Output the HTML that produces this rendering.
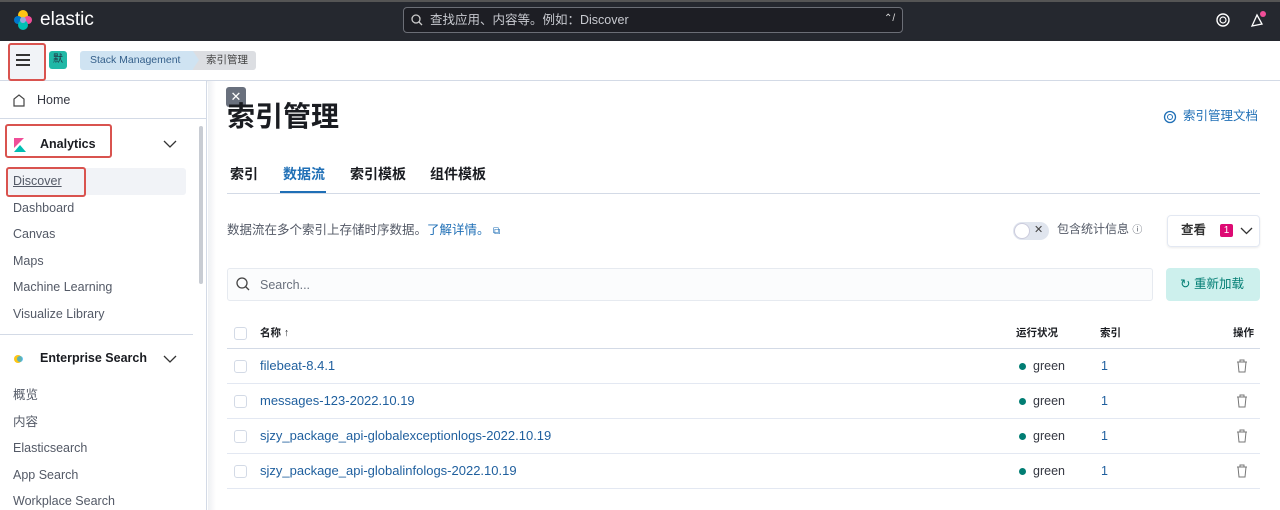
<!DOCTYPE html>
<html><head><meta charset="utf-8"><style>
*{box-sizing:border-box;margin:0;padding:0}
body{width:1280px;height:510px;overflow:hidden;font-family:"Liberation Sans","Noto Sans CJK SC",sans-serif;background:#fff;position:relative;color:#343741;line-height:1.15}
.abs{position:absolute}
.top{left:0;top:0;width:1280px;height:41px;background:#25282f;border-top:2px solid #555}
.bar2{left:0;top:41px;width:1280px;height:40px;background:#fff;border-bottom:1px solid #d3dae6;box-shadow:0 1px 3px rgba(0,0,0,.08)}
.side{left:0;top:81px;width:207px;height:429px;background:#fff;border-right:1px solid #d3dae6}
.main{left:208px;top:81px;width:1072px;height:429px;background:#fff}
.red{border:2px solid #d9534f;border-radius:3px}
.nav{font-size:12.5px;color:#535966;left:13px}
.tab{font-size:14px;font-weight:bold;top:166px;color:#1a1c21}
.row{left:227px;width:1033px;height:35px;border-bottom:1px solid #e3e8f2}
.cb{position:absolute;left:7px;top:11px;width:13px;height:13px;border:1px solid #d3dae6;border-radius:3px}
.lnk{position:absolute;left:33px;top:10px;font-size:13px;color:#1f5f9e}
.dot{position:absolute;left:792px;top:14px;width:7px;height:7px;border-radius:50%;background:#017d73}
.gr{position:absolute;left:806px;top:10px;font-size:12.5px;color:#343741}
.one{position:absolute;left:874px;top:10px;font-size:12.5px;color:#1f5f9e}
.tr{position:absolute;left:1008px;top:9px}
</style></head><body>
<div class="abs top"></div>
<svg class="abs" style="left:12px;top:9px" width="22" height="22" viewBox="0 0 22 22"><circle cx="11" cy="6" r="5" fill="#fec514"/><circle cx="6" cy="11" r="4" fill="#0077cc"/><circle cx="16" cy="11" r="4" fill="#f04e98"/><circle cx="11" cy="16" r="5" fill="#00bfb3"/><circle cx="11" cy="11" r="3" fill="#9ad"/></svg>
<div class="abs" style="left:40px;top:9px;color:#fff;font-size:19px">elastic</div>
<div class="abs" style="left:403px;top:7px;width:500px;height:26px;border:1px solid #6b6e76;border-radius:4px;background:#1d1e24"></div>
<svg class="abs" style="left:411px;top:14px" width="12" height="12"><circle cx="5" cy="5" r="4" stroke="#ccc" fill="none" stroke-width="1.3"/><path d="M8 8l3 3" stroke="#ccc" stroke-width="1.3"/></svg>
<div class="abs" style="left:430px;top:13px;font-size:12.5px;color:#c8cad0">查找应用、内容等。例如：Discover</div>
<div class="abs" style="left:884px;top:13px;font-size:10px;color:#ddd">⌃/</div>
<svg class="abs" style="left:1215px;top:12px" width="16" height="16"><circle cx="8" cy="8" r="6" stroke="#fff" fill="none" stroke-width="1.4"/><circle cx="8" cy="8" r="3" stroke="#fff" fill="none" stroke-width="1.2"/></svg>
<svg class="abs" style="left:1249px;top:11px" width="18" height="18"><path d="M3 15L8 4l5 9z" stroke="#fff" fill="none" stroke-width="1.3"/><circle cx="14" cy="3" r="3" fill="#f04e98"/></svg>
<div class="abs bar2"></div>
<div class="abs red" style="left:8px;top:43px;width:38px;height:38px;background:#f1f3f7"></div>
<div class="abs" style="left:16px;top:54px;width:14px;height:2px;background:#333;box-shadow:0 5px 0 #333,0 10px 0 #333"></div>
<div class="abs" style="left:49px;top:51px;width:18px;height:18px;border-radius:3px;background:#20b8a6;font-size:10px;text-align:center;line-height:18px;color:#234">默</div>
<div class="abs" style="left:80px;top:51px;width:113px;height:19px;background:#cfe3f2;border-radius:3px 0 0 3px;font-size:10.5px;color:#345f8a;line-height:19px;padding-left:10px">Stack Management</div>
<div class="abs" style="left:193px;top:51px;width:63px;height:19px;background:#dcdee2;border-radius:0 3px 3px 0;font-size:10.5px;line-height:19px;padding-left:13px;color:#444">索引管理</div>
<div class="abs" style="left:193px;top:51px;width:0;height:0;border-top:9.5px solid transparent;border-bottom:9.5px solid transparent;border-left:6px solid #cfe3f2"></div>
<div class="abs side"></div>
<div class="abs" style="left:0;top:81px;width:207px;height:38px;border-bottom:1px solid #d3dae6"></div>
<svg class="abs" style="left:12px;top:93px" width="14" height="14"><path d="M2 13V6l5-4 5 4v7z" stroke="#444" fill="none" stroke-width="1.2"/></svg>
<div class="abs" style="left:37px;top:93px;font-size:12.5px">Home</div>
<div class="abs red" style="left:5px;top:124px;width:107px;height:34px"></div>
<svg class="abs" style="left:14px;top:138px" width="12" height="14"><path d="M0 0h10L0 10z" fill="#f04e98"/><path d="M0 14L6 7l6 7z" fill="#00bfb3"/></svg>
<div class="abs" style="left:40px;top:137px;font-size:12.5px;font-weight:bold;color:#1a1c21">Analytics</div>
<svg class="abs" style="left:163px;top:140px" width="14" height="9"><path d="M1 1l6 6 6-6" stroke="#333" fill="none" stroke-width="1.3"/></svg>
<div class="abs" style="left:8px;top:168px;width:178px;height:27px;background:#f1f3f7;border-radius:3px"></div>
<div class="abs red" style="left:6px;top:167px;width:80px;height:30px"></div>
<div class="abs nav" style="top:174px;text-decoration:underline">Discover</div>
<div class="abs nav" style="top:201px">Dashboard</div>
<div class="abs nav" style="top:227px">Canvas</div>
<div class="abs nav" style="top:254px">Maps</div>
<div class="abs nav" style="top:280px">Machine Learning</div>
<div class="abs nav" style="top:307px">Visualize Library</div>
<div class="abs" style="left:199px;top:126px;width:4px;height:158px;background:#c8ccd3;border-radius:2px"></div>
<div class="abs" style="left:0;top:334px;width:193px;height:1px;background:#d3dae6"></div>
<svg class="abs" style="left:12px;top:351px" width="16" height="16"><circle cx="6" cy="8" r="4" fill="#fec514"/><path d="M8 2a6 6 0 010 12 6 6 0 000-12z" fill="#00bfb3"/><circle cx="8" cy="8" r="3" fill="#1ba9f5" opacity=".7"/></svg>
<div class="abs" style="left:40px;top:351px;font-size:12.5px;font-weight:bold;color:#1a1c21">Enterprise Search</div>
<svg class="abs" style="left:163px;top:355px" width="14" height="9"><path d="M1 1l6 6 6-6" stroke="#333" fill="none" stroke-width="1.3"/></svg>
<div class="abs nav" style="top:388px">概览</div>
<div class="abs nav" style="top:415px">内容</div>
<div class="abs nav" style="top:441px">Elasticsearch</div>
<div class="abs nav" style="top:468px">App Search</div>
<div class="abs nav" style="top:494px">Workplace Search</div>
<div class="abs main"></div>
<div class="abs" style="left:208px;top:81px;width:8px;height:429px;background:linear-gradient(90deg,#eef0f3,#fff)"></div>
<div class="abs" style="left:226px;top:87px;width:20px;height:20px;background:#69707d;border-radius:3px;color:#fff;text-align:center;line-height:20px;font-size:13px">✕</div>
<div class="abs" style="left:227px;top:101px;font-size:28px;font-weight:bold;color:#1a1c21">索引管理</div>
<svg class="abs" style="left:1163px;top:110px" width="14" height="14"><circle cx="7" cy="7" r="5.5" stroke="#1f6fb6" fill="none" stroke-width="1.3"/><circle cx="7" cy="7" r="2.5" stroke="#1f6fb6" fill="none"/></svg>
<div class="abs" style="left:1183px;top:109px;font-size:12.5px;color:#1f6fb6">索引管理文档</div>
<div class="abs tab" style="left:230px">索引</div>
<div class="abs tab" style="left:283px;color:#1f6fb6">数据流</div>
<div class="abs" style="left:280px;top:191px;width:46px;height:2px;background:#1f6fb6"></div>
<div class="abs tab" style="left:350px">索引模板</div>
<div class="abs tab" style="left:430px">组件模板</div>
<div class="abs" style="left:227px;top:193px;width:1033px;height:1px;background:#d3dae6"></div>
<div class="abs" style="left:227px;top:223px;font-size:12.5px;color:#535966">数据流在多个索引上存储时序数据。<span style="color:#1f6fb6">了解详情。</span> <span style="color:#1f6fb6;font-size:10px">⧉</span></div>
<div class="abs" style="left:1013px;top:222px;width:36px;height:18px;border-radius:9px;background:#e0e5ee"></div>
<div class="abs" style="left:1014px;top:223px;width:16px;height:16px;border-radius:50%;background:#fff;border:1px solid #ccd"></div>
<div class="abs" style="left:1034px;top:224px;font-size:11px;color:#444">✕</div>
<div class="abs" style="left:1057px;top:223px;font-size:12px;color:#535966">包含统计信息 <span style="font-size:10px">ⓘ</span></div>
<div class="abs" style="left:1167px;top:215px;width:93px;height:32px;border:1px solid #e3e8f2;border-radius:4px;box-shadow:0 1px 2px rgba(0,0,0,.08)"></div>
<div class="abs" style="left:1181px;top:223px;font-size:12.5px;font-weight:bold;color:#333">查看</div>
<div class="abs" style="left:1220px;top:224px;width:13px;height:13px;background:#dd0a73;border-radius:2px;color:#fff;font-size:10px;text-align:center;line-height:13px">1</div>
<svg class="abs" style="left:1240px;top:227px" width="13" height="8"><path d="M1 1l5.5 5.5L12 1" stroke="#333" fill="none" stroke-width="1.3"/></svg>
<div class="abs" style="left:227px;top:268px;width:926px;height:33px;background:#fbfcfd;border:1px solid #e6eaf0;border-radius:3px"></div>
<svg class="abs" style="left:236px;top:277px" width="14" height="14"><circle cx="6" cy="6" r="5" stroke="#444" fill="none" stroke-width="1.3"/><path d="M9.5 9.5l3.5 3.5" stroke="#444" stroke-width="1.3"/></svg>
<div class="abs" style="left:260px;top:278px;font-size:12.5px;color:#69707d">Search...</div>
<div class="abs" style="left:1166px;top:268px;width:94px;height:33px;background:#cdf0ed;border-radius:4px"></div>
<div class="abs" style="left:1180px;top:277px;font-size:12.5px;color:#017d73">↻ 重新加载</div>
<div class="abs row" style="top:318px;height:31px;border-bottom:1px solid #d3dae6"><div class="cb" style="top:9px"></div><div class="abs" style="left:33px;top:9px;font-size:10.5px;font-weight:bold;color:#1a1c21">名称 ↑</div><div class="abs" style="left:789px;top:9px;font-size:10.5px;font-weight:bold;color:#1a1c21">运行状况</div><div class="abs" style="left:873px;top:9px;font-size:10.5px;font-weight:bold;color:#1a1c21">索引</div><div class="abs" style="left:1006px;top:9px;font-size:10.5px;font-weight:bold;color:#1a1c21">操作</div></div>
<div class="abs row" style="top:349px"><div class="cb"></div><div class="lnk">filebeat-8.4.1</div><div class="dot"></div><div class="gr">green</div><div class="one">1</div><div class="tr"><svg width="14" height="16"><path d="M2 4h10M5 4V2h4v2M3 4l1 10h6l1-10" stroke="#777" fill="none"/></svg></div></div>
<div class="abs row" style="top:384px"><div class="cb"></div><div class="lnk">messages-123-2022.10.19</div><div class="dot"></div><div class="gr">green</div><div class="one">1</div><div class="tr"><svg width="14" height="16"><path d="M2 4h10M5 4V2h4v2M3 4l1 10h6l1-10" stroke="#777" fill="none"/></svg></div></div>
<div class="abs row" style="top:419px"><div class="cb"></div><div class="lnk">sjzy_package_api-globalexceptionlogs-2022.10.19</div><div class="dot"></div><div class="gr">green</div><div class="one">1</div><div class="tr"><svg width="14" height="16"><path d="M2 4h10M5 4V2h4v2M3 4l1 10h6l1-10" stroke="#777" fill="none"/></svg></div></div>
<div class="abs row" style="top:454px"><div class="cb"></div><div class="lnk">sjzy_package_api-globalinfologs-2022.10.19</div><div class="dot"></div><div class="gr">green</div><div class="one">1</div><div class="tr"><svg width="14" height="16"><path d="M2 4h10M5 4V2h4v2M3 4l1 10h6l1-10" stroke="#777" fill="none"/></svg></div></div>
</body></html>
